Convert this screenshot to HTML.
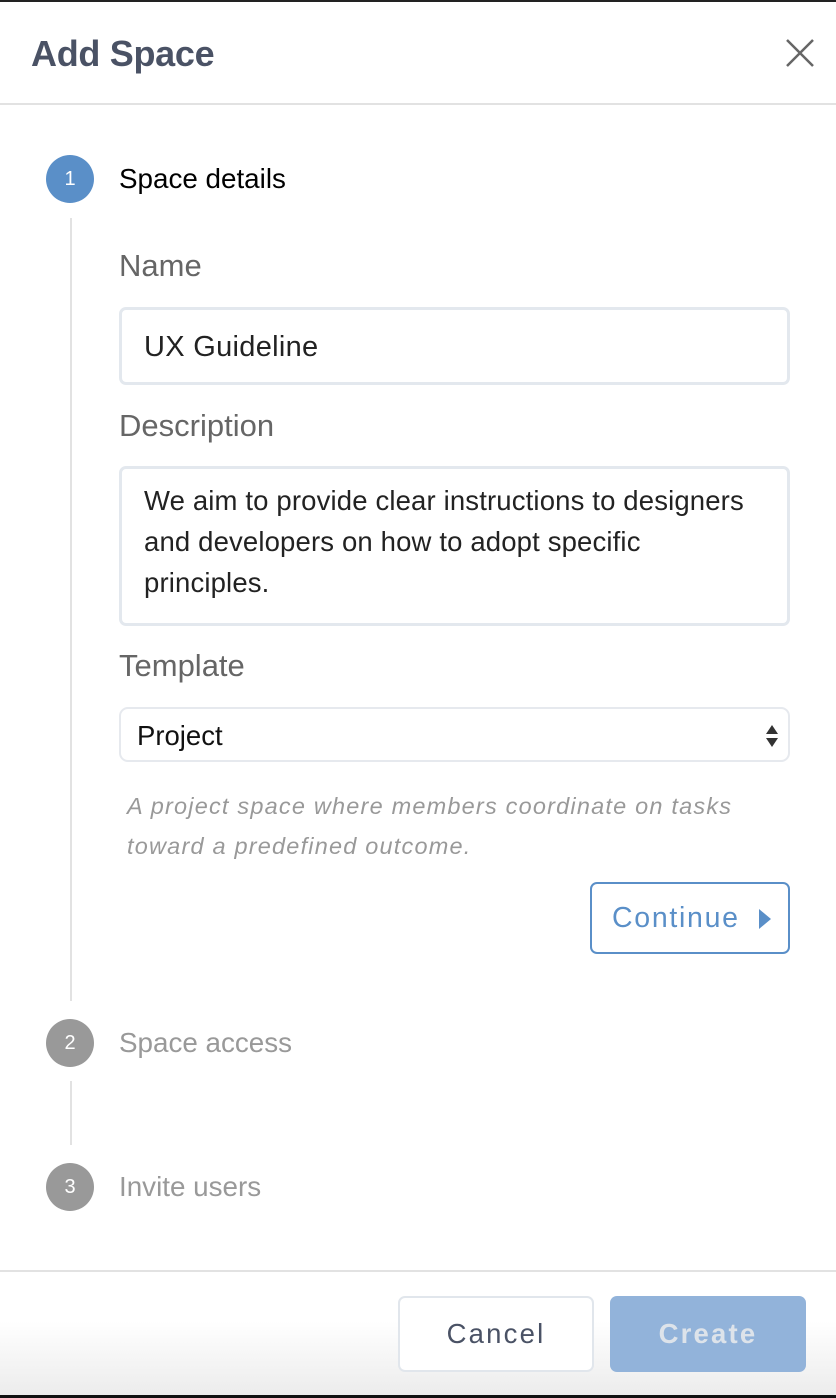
<!DOCTYPE html>
<html><head><meta charset="utf-8"><style>
*{box-sizing:border-box;margin:0;padding:0}
body{width:836px;height:1398px;background:#fff;font-family:"Liberation Sans",sans-serif;position:relative;overflow:hidden}
.abs{position:absolute}
.top{left:0;top:0;width:836px;height:2px;background:#222}
.bot{left:0;bottom:0;width:836px;height:3px;background:#111}
h1{position:absolute;left:31px;top:33px;font-size:36px;font-weight:bold;color:#4a5265;letter-spacing:-0.3px}
.hr{left:0;width:836px;height:2px;background:#e2e2e2}
.circ{width:48px;height:48px;border-radius:50%;color:#fff;font-size:20px;text-align:center;line-height:48px}
.vl{left:70px;width:2px;background:#e2e2e2}
.lbl{font-size:31px;color:#666}
.step{font-size:27.8px}
.inp{left:119px;width:671px;border:3px solid #e3e8ee;border-radius:7px;font-size:29px;color:#222}
</style></head><body>
<div class="abs top"></div>
<h1>Add Space</h1>
<svg class="abs" style="left:784px;top:37px" width="32" height="32" viewBox="0 0 32 32"><path d="M3 3L29 29M29 3L3 29" stroke="#666" stroke-width="2.5"/></svg>
<div class="abs hr" style="top:103px"></div>

<div class="abs circ" style="left:46px;top:155px;background:#5a8fc8">1</div>
<div class="abs step" style="left:119px;top:163px;color:#000">Space details</div>
<div class="abs vl" style="top:218px;height:783px"></div>

<div class="abs lbl" style="left:119px;top:248px">Name</div>
<div class="abs inp" style="top:307px;height:78px;padding:21px 0 0 22px;letter-spacing:0.3px">UX Guideline</div>
<div class="abs lbl" style="left:119px;top:408px">Description</div>
<div class="abs inp" style="top:466px;height:160px;padding:11px 0 0 22px;line-height:41px;font-size:27.5px;letter-spacing:0.15px">We aim to provide clear instructions to designers<br>and developers on how to adopt specific<br>principles.</div>
<div class="abs lbl" style="left:119px;top:648px">Template</div>
<div class="abs" style="left:119px;top:707px;width:671px;height:55px;border:2px solid #e6e9ee;border-radius:9px;font-size:27.5px;color:#111;padding:11px 0 0 16px">Project
<svg class="abs" style="right:9px;top:15px" width="14" height="24" viewBox="0 0 14 24"><path d="M1 10L7 1L13 10Z M1 14L7 23L13 14Z" fill="#333"/></svg></div>
<div class="abs" style="left:127px;top:786px;font-size:23.5px;font-style:italic;color:#999;line-height:40px;letter-spacing:1.2px">A project space where members coordinate on tasks<br>toward a predefined outcome.</div>
<div class="abs" style="left:590px;top:882px;width:200px;height:72px;border:2px solid #5a8fc8;border-radius:7px;color:#5a8fc8;font-size:28.5px;letter-spacing:1.7px;padding:18px 0 0 20px">Continue
<svg class="abs" style="left:166px;top:24px" width="14" height="22" viewBox="0 0 14 22"><path d="M1 1L13 11L1 21Z" fill="#5a8fc8"/></svg></div>

<div class="abs circ" style="left:46px;top:1019px;background:#999">2</div>
<div class="abs step" style="left:119px;top:1027px;color:#999">Space access</div>
<div class="abs vl" style="top:1081px;height:64px"></div>
<div class="abs circ" style="left:46px;top:1163px;background:#999">3</div>
<div class="abs step" style="left:119px;top:1171px;color:#999">Invite users</div>

<div class="abs hr" style="top:1270px"></div>
<div class="abs" style="left:0;top:1272px;width:836px;height:123px;background:linear-gradient(#fff 40%,#ececec)"></div>
<div class="abs" style="left:398px;top:1296px;width:196px;height:76px;border:2px solid #e1e6ec;border-radius:7px;background:#fff;text-align:center;line-height:72px;font-size:27.5px;color:#4a5265;letter-spacing:2.2px">Cancel</div>
<div class="abs" style="left:610px;top:1296px;width:196px;height:76px;border-radius:7px;background:#92b3da;text-align:center;line-height:76px;font-size:27.5px;font-weight:bold;color:#dde3ea;letter-spacing:2.2px">Create</div>
<div class="abs bot"></div>
</body></html>
